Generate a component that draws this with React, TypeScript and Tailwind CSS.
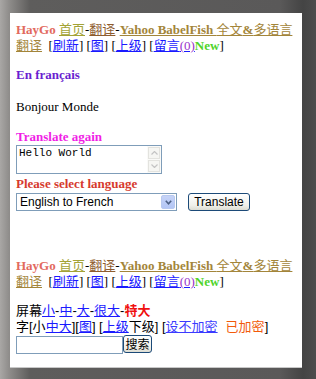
const serif = "font-['Liberation_Serif','Noto_Sans_CJK_SC',serif]";

const Header = () => (
  <div className="text-[13px] leading-[16px]">
    <span className="font-bold text-[#e26a5e]">HayGo</span>{" "}
    <a className="underline text-[#a3a336]">首页</a>
    <span className="text-black">-</span>
    <a className="underline text-[#8e5c2e]">翻译</a>
    <span className="text-black">-</span>
    <a className="underline font-bold text-[#a3853a]">
      Yahoo BabelFish <span className="font-normal">全文</span>&amp;<span className="font-normal">多语言翻译</span>
    </a>
    <span className="text-black">&nbsp;&nbsp;[</span>
    <a className="underline text-[#1a1aff]">刷新</a>
    <span className="text-black">] [</span>
    <a className="underline text-[#1a1aff]">图</a>
    <span className="text-black">] [</span>
    <a className="underline text-[#1a1aff]">上级</a>
    <span className="text-black">] [</span>
    <a className="underline text-[#1a1aff]">
      留言<span className="text-[#9933cc]">(0)</span>
    </a>
    <span className="font-bold text-[#4fd42a]">New</span>
    <span className="text-black">]</span>
  </div>
);

const ArrowUp = () => (
  <svg width="7" height="4" viewBox="0 0 7 4">
    <path d="M0.5 3.5 L3.5 0.5 L6.5 3.5" fill="none" stroke="#c4c4c4" strokeWidth="1.2" />
  </svg>
);

const ArrowDown = () => (
  <svg width="7" height="4" viewBox="0 0 7 4">
    <path d="M0.5 0.5 L3.5 3.5 L6.5 0.5" fill="none" stroke="#c4c4c4" strokeWidth="1.2" />
  </svg>
);

export default function App() {
  return (
    <div className="w-[316px] h-[379px] overflow-hidden bg-[linear-gradient(90deg,#a9a7a5_0px,#8f8d8b_9px,#5e5d5c_30px,#5a5959_280px,#444_303px,#4d4d4d_316px)] pt-[13px] pl-[10px]">
      <div className={`w-[292px] h-[354px] bg-white pl-[6px] pt-[9px] ${serif} shadow-[0_1px_0_#c8c8c8]`}>
        <Header />

        <div className="mt-[13px] text-[13px] leading-[16px] font-bold text-[#6a1fd0]">En français</div>
        <div className="mt-[16px] text-[13px] leading-[16px] text-black">Bonjour Monde</div>
        <div className="mt-[14px] text-[13px] leading-[16px] font-bold text-[#f01ee6]">Translate again</div>

        <div className="w-[146px] h-[29px] border border-[#7f9db9] flex bg-white">
          <div className="flex-1 pl-[2px] pt-[1px] font-['Liberation_Mono',monospace] text-[11px] leading-[13px] text-black">
            Hello World
          </div>
          <div className="w-[14px] flex flex-col gap-[1px] p-[1px] bg-[#fafaf8]">
            <div className="flex-1 border border-[#e3e3df] bg-[#f6f6f3] flex items-center justify-center">
              <ArrowUp />
            </div>
            <div className="flex-1 border border-[#e3e3df] bg-[#f6f6f3] flex items-center justify-center">
              <ArrowDown />
            </div>
          </div>
        </div>

        <div className="mt-[2px] text-[13px] leading-[16px] font-bold text-[#d63a2e]">Please select language</div>

        <div className="mt-[1px] flex items-center">
          <div className="w-[161px] h-[18px] border border-[#7f9db9] flex items-center bg-white">
            <span className="flex-1 pl-[3px] font-['Liberation_Sans',sans-serif] text-[12px] leading-[14px] text-black">
              English to French
            </span>
            <div className="w-[14px] h-[14px] mr-[1px] rounded-[2px] bg-[linear-gradient(180deg,#c6d3f7,#b3c6f5)] border border-[#b8c9f0] flex items-center justify-center">
              <svg width="7" height="5" viewBox="0 0 7 5">
                <path d="M0.8 0.8 L3.5 3.8 L6.2 0.8" fill="none" stroke="#4d6185" strokeWidth="1.6" />
              </svg>
            </div>
          </div>
          <button className="ml-[11px] -mt-[1px] w-[62px] h-[18px] rounded-[3px] border border-[#1c4a78] bg-[linear-gradient(180deg,#ffffff,#f0f0ea_70%,#dcdcd2)] font-['Liberation_Sans',sans-serif] text-[12px] leading-[14px] text-black">
            Translate
          </button>
        </div>

        <div className="mt-[47px]">
          <Header />
        </div>

        <div className="mt-[13px] font-['Liberation_Sans','Noto_Sans_CJK_SC',sans-serif] text-[13px] leading-[16px] text-black">
          屏幕<a className="underline text-[#1a1aff]">小</a>-<a className="underline text-[#1a1aff]">中</a>-
          <a className="underline text-[#1a1aff]">大</a>-<a className="underline text-[#1a1aff]">很大</a>-
          <span className="font-bold text-[#f01010]">特大</span>
        </div>
        <div className="font-['Liberation_Sans','Noto_Sans_CJK_SC',sans-serif] text-[13px] leading-[16px] text-black">
          字[小<a className="underline text-[#1a1aff]">中大</a>][<a className="underline text-[#1a1aff]">图</a>] [
          <a className="underline text-[#1a1aff]">上级</a>下级] [<a className="underline text-[#3b3bff]">设不加密</a>
          <span className="ml-[8px] text-[#f25a0a]">已加密</span>]
        </div>
        <div className="flex items-start">
          <div className="w-[107px] h-[18px] mt-[1px] border border-[#7f9db9] bg-white" />
          <button className="w-[29px] h-[18px] rounded-[3px] border border-[#1c4a78] bg-[linear-gradient(180deg,#ffffff,#f0f0ea_70%,#dcdcd2)] font-['Noto_Sans_CJK_SC',sans-serif] text-[12px] leading-[14px] text-black">
            搜索
          </button>
        </div>
      </div>
    </div>
  );
}
